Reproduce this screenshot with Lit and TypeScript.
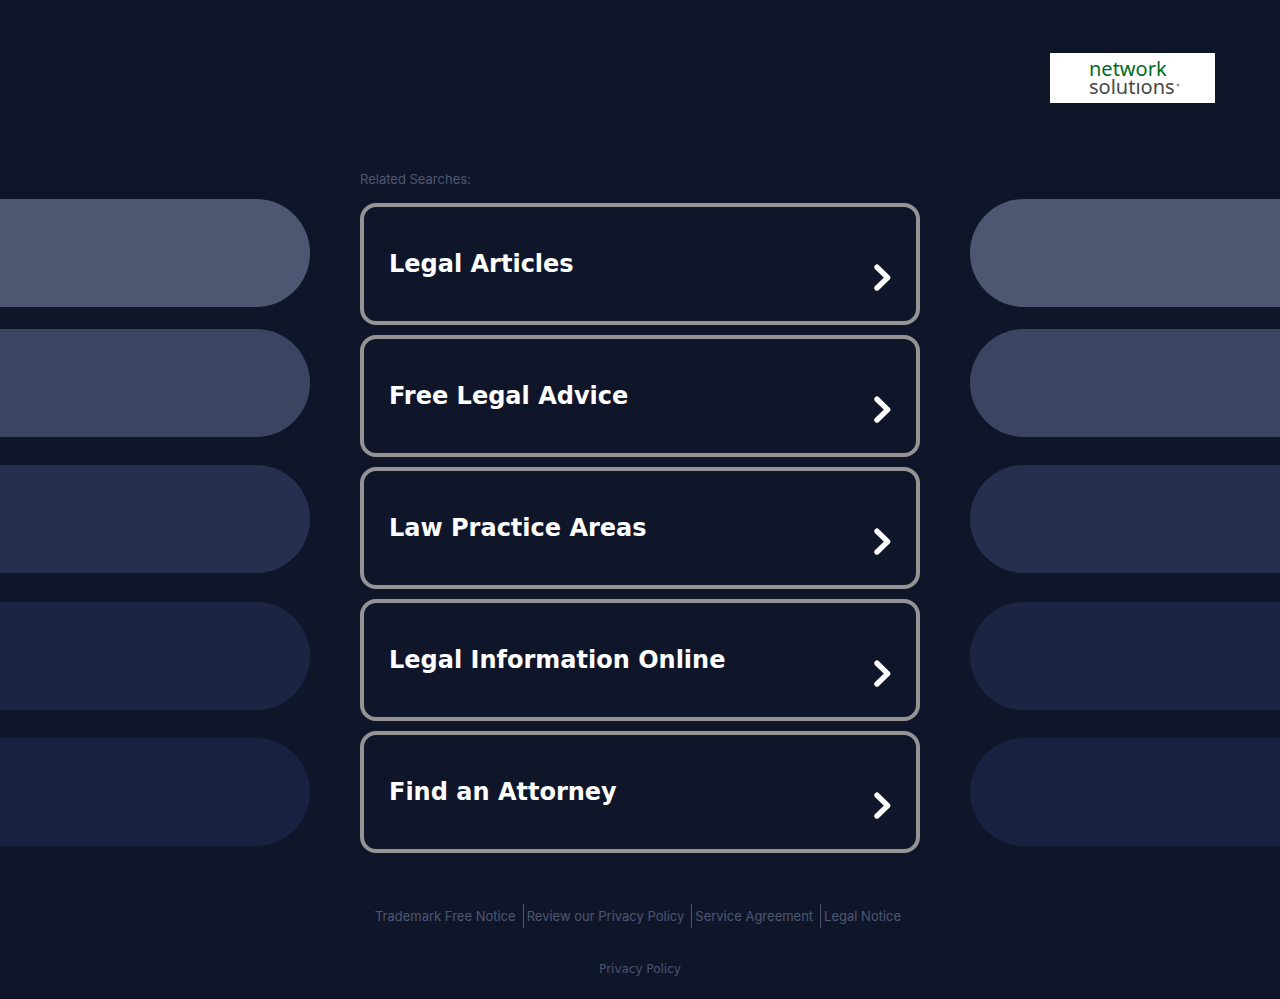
import { LitElement, html, css } from "lit";
import { customElement } from "lit/decorators.js";

const SEARCHES = [
  "Legal Articles",
  "Free Legal Advice",
  "Law Practice Areas",
  "Legal Information Online",
  "Find an Attorney",
];

const NOTICES = [
  "Trademark Free Notice",
  "Review our Privacy Policy",
  "Service Agreement",
  "Legal Notice",
];

@customElement("search-card")
class SearchCard extends LitElement {
  static properties = { label: {} };
  declare label: string;

  static styles = css`
    :host { display: block; }
    .card {
      display: flex;
      align-items: center;
      justify-content: space-between;
      box-sizing: border-box;
      min-height: 122px;
      padding: 0 25px;
      border: 4px solid #949494;
      border-radius: 16px;
      color: #fff;
      font: bold 24px/28px "DejaVu Sans", sans-serif;
      text-decoration: none;
    }
    .arrow { flex: none; display: block; margin-top: 28px; }
  `;

  render() {
    return html`<a class="card" href="#">
      <span>${this.label}</span>
      <svg class="arrow" width="18" height="28" viewBox="0 0 18 28" aria-hidden="true">
        <path d="M4 3.2 L14.7 13.6 L4 24" fill="none" stroke="#fff" stroke-width="5.4" stroke-linecap="round" stroke-linejoin="round" />
      </svg>
    </a>`;
  }
}

@customElement("pill-stack")
class PillStack extends LitElement {
  static styles = css`
    :host { display: flex; flex-direction: column; gap: 28px; padding-top: 27px; }
    .pill { height: 108px; border-radius: var(--pill-radius); }
    .p1 { background: #4e5772; margin-bottom: -6px; }
    .p2 { background: #3b4461; }
    .p3 { background: #262f4e; margin-bottom: 1px; }
    .p4 { background: #1b2443; }
    .p5 { background: #192140; }
  `;

  render() {
    return [1, 2, 3, 4, 5].map((n) => html`<div class="pill p${n}"></div>`);
  }
}

@customElement("app-root")
class AppRoot extends LitElement {
  static styles = css`
    :host {
      display: block;
      box-sizing: border-box;
      min-height: 100vh;
      background: #10162a;
      color: #4e5772;
      font: 13px/14px Inter, sans-serif;
    }
    header { display: flex; justify-content: flex-end; padding: 53px 65px 69px; }
    .logo { display: block; background: #fff; }
    .stage {
      display: grid;
      grid-template-columns: 1fr minmax(0, 560px) 1fr;
      column-gap: 50px;
    }
    .left { --pill-radius: 0 54px 54px 0; }
    .right { --pill-radius: 54px 0 0 54px; }
    .heading { margin: 0 0 17px; font: inherit; }
    .cards { display: grid; gap: 10px; }
    nav { display: flex; justify-content: center; margin-top: 51px; }
    .notice {
      padding: 0 7px 0 3px;
      border-right: 1px solid #4e5772;
      color: inherit;
      line-height: 24px;
      text-decoration: none;
      white-space: nowrap;
    }
    .notice:last-child { border: 0; }
    .policy {
      display: block;
      width: max-content;
      margin: 34px auto 0;
      color: #4b546e;
      font: 12px/14px "DejaVu Sans", sans-serif;
      text-decoration: none;
    }
  `;

  render() {
    return html`
      <header>
        <svg class="logo" width="165" height="50" viewBox="0 0 165 50" role="img" aria-label="network solutions" font-family="'Noto Sans', sans-serif" font-size="20">
          <text x="39" y="23" fill="#006b1f">network</text>
          <text x="39" y="41" fill="#484848">solutıons</text>
          <circle cx="128" cy="32" r="1.5" fill="#999" />
        </svg>
      </header>
      <div class="stage">
        <pill-stack class="left"></pill-stack>
        <main>
          <h2 class="heading">Related Searches:</h2>
          <div class="cards">
            ${SEARCHES.map((s) => html`<search-card .label=${s}></search-card>`)}
          </div>
        </main>
        <pill-stack class="right"></pill-stack>
      </div>
      <footer>
        <nav>${NOTICES.map((n) => html`<a class="notice" href="#">${n}</a>`)}</nav>
        <a class="policy" href="#">Privacy Policy</a>
      </footer>
    `;
  }
}
